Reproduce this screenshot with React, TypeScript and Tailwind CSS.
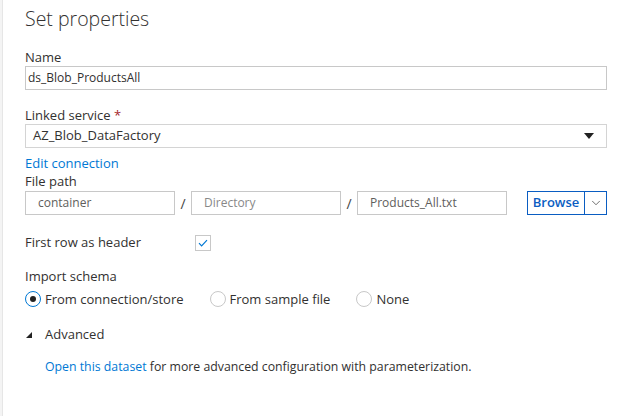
import { ChevronDown } from "lucide-react";

const font = { fontFamily: '"Open Sans", "Noto Sans", sans-serif' };

function Label({ children }: { children: React.ReactNode }) {
  return <div className="text-[13px] leading-[18px] text-[#323130]">{children}</div>;
}

function Radio({ checked, label }: { checked?: boolean; label: string }) {
  return (
    <div className="flex items-center gap-[4px]">
      <span
        className={`flex h-[16px] w-[16px] items-center justify-center rounded-full border ${
          checked ? "border-[#0078d4]" : "border-[#c8c8c8]"
        }`}
      >
        {checked && <span className="h-[6px] w-[6px] rounded-full bg-[#222]" />}
      </span>
      <span className="text-[13px] text-[#323130]">{label}</span>
    </div>
  );
}

export default function App() {
  return (
    <div className="flex h-[416px] w-[629px] bg-white" style={font}>
      {/* left gutter */}
      <div className="w-[3px] border-r border-[#e6e6e6] bg-[#f4f4f4]" />

      <div className="flex flex-1 flex-col pl-[22px] pr-[22px]">
        <h1 className="mt-[4px] text-[19.5px] font-light leading-[30px] text-[#323130]">Set properties</h1>

        <div className="mt-[14px]">
          <Label>Name</Label>
          <div className="flex h-[24px] items-center border border-[#c8c8c8] px-[2px] text-[12px] text-[#323130]">
            ds_Blob_ProductsAll
          </div>
        </div>

        <div className="mt-[16px]">
          <Label>
            Linked service <span className="text-[#a4262c]">*</span>
          </Label>
          <div className="flex h-[24px] items-center justify-between border border-[#d4d4d4] px-[7px] text-[13px] text-[#323130]">
            AZ_Blob_DataFactory
            <svg width="10" height="6" viewBox="0 0 10 6" className="mr-[5px]">
              <path d="M0 0h10L5 6z" fill="#222" />
            </svg>
          </div>
        </div>

        <a className="mt-[6px] text-[13px] leading-[18px] text-[#0078d4]">Edit connection</a>
        <Label>File path</Label>

        <div className="mt-[1px] flex h-[24px] items-center text-[12px] text-[#605e5c]">
          <div className="flex h-full w-[150px] items-center border border-[#c8c8c8] px-[12px]">container</div>
          <span className="w-[16px] text-center text-[14px] text-[#444]">/</span>
          <div className="flex h-full w-[150px] items-center border border-[#c8c8c8] px-[12px] text-[#888]">Directory</div>
          <span className="w-[16px] text-center text-[14px] text-[#444]">/</span>
          <div className="flex h-full w-[150px] items-center border border-[#c8c8c8] px-[12px]">Products_All.txt</div>
          <div className="ml-[20px] flex h-full border border-[#0a5dc2]">
            <span className="flex w-[57px] items-center justify-center border-r border-[#0a5dc2] text-[13px] font-semibold text-[#0a5dc2]">
              Browse
            </span>
            <span className="flex w-[21px] items-center justify-center">
              <ChevronDown size={14} strokeWidth={1.2} color="#333" />
            </span>
          </div>
        </div>

        <div className="mt-[18px] flex items-center">
          <span className="w-[170px] text-[13px] text-[#323130]">First row as header</span>
          <span className="flex h-[16px] w-[16px] items-center justify-center border border-[#c8c8c8]">
            <svg width="10" height="8" viewBox="0 0 10 8">
              <path d="M1 4.2l2.6 2.6L9 1.2" fill="none" stroke="#0078d4" strokeWidth="1.2" />
            </svg>
          </span>
        </div>

        <div className="mt-[14px]">
          <Label>Import schema</Label>
          <div className="mt-[5px] flex items-center gap-[26px]">
            <Radio checked label="From connection/store" />
            <Radio label="From sample file" />
            <Radio label="None" />
          </div>
        </div>

        <div className="mt-[16px] ml-[1px] flex items-center gap-[13px] text-[13px] text-[#323130]">
          <svg width="6" height="6" viewBox="0 0 6 6">
            <path d="M6 0v6H0z" fill="#222" />
          </svg>
          Advanced
        </div>

        <p className="mt-[13px] pl-[20px] text-[12.3px] text-[#323130]">
          <a className="text-[#0078d4]">Open this dataset</a> for more advanced configuration with parameterization.
        </p>
      </div>
    </div>
  );
}
